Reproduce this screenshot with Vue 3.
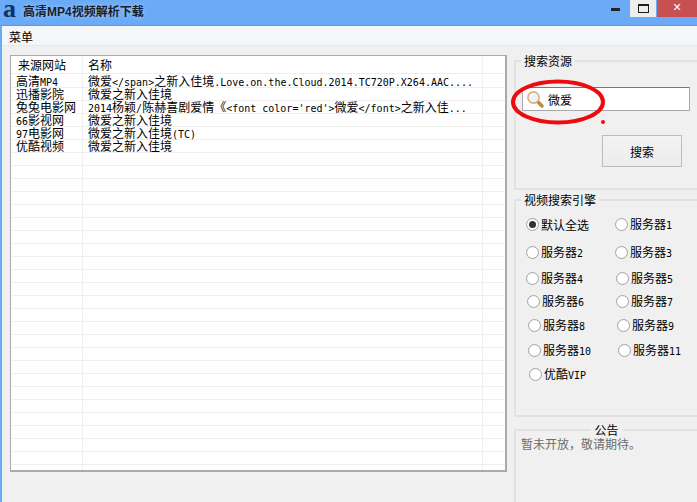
<script setup>
const segs = (t) => t.match(/[\x20-\x7e]+|[^\x20-\x7e]+/g).map((s) => ({ s, l: /^[\x20-\x7e]/.test(s) }))
const rows = [
  ['高清MP4', '微爱</span>之新入佳境.Love.on.the.Cloud.2014.TC720P.X264.AAC....'],
  ['迅播影院', '微爱之新入佳境'],
  ['兔兔电影网', "2014杨颖/陈赫喜剧爱情《<font color='red'>微爱</font>之新入佳..."],
  ['66影视网', '微爱之新入佳境'],
  ['97电影网', '微爱之新入佳境(TC)'],
  ['优酷视频', '微爱之新入佳境'],
]
const list = Array.from({ length: 31 }, (_, i) => {
  const r = rows[i] || ['', '']
  return { id: i, a: r[0] ? segs(r[0]) : [], b: r[1] ? segs(r[1]) : [] }
})
const radios = [
  [{ t: '默认全选', on: true, x: 0 }, { t: '服务器1', x: 0 }],
  [{ t: '服务器2', x: 0 }, { t: '服务器3', x: 0 }],
  [{ t: '服务器4', x: 0 }, { t: '服务器5', x: 1 }],
  [{ t: '服务器6', x: 1 }, { t: '服务器7', x: 0 }],
  [{ t: '服务器8', x: 2 }, { t: '服务器9', x: 0 }],
  [{ t: '服务器10', x: 2 }, { t: '服务器11', x: 1 }],
  [{ t: '优酷VIP', x: 3 }],
].map((r, i) => ({
  id: i,
  h: [28, 26, 23, 24, 25, 24, 24][i],
  cells: r.map((c) => ({ ...c, seg: segs(c.t) })),
}))
</script>

<template>
  <div class="win">
    <header class="title">
      <span class="logo">a</span>
      <span class="cap">高清<span class="capl">MP4</span>视频解析下载</span>
      <div class="ctrls">
        <span class="min"></span>
        <span class="max"><i></i></span>
        <span class="close">✕</span>
      </div>
    </header>
    <div class="inner">
      <nav class="menu">菜单</nav>
      <main class="body">
        <section class="list">
          <div class="head">
            <div class="h1">来源网站</div>
            <div class="h2">名称</div>
            <div class="h3"></div>
          </div>
          <div class="rows">
            <div v-for="r in list" :key="r.id" class="row">
              <div class="c1"><template v-for="(p, i) in r.a" :key="i"><span :class="{ lat: p.l }">{{ p.s }}</span></template></div>
              <div class="c2"><template v-for="(p, i) in r.b" :key="i"><span :class="{ lat: p.l }">{{ p.s }}</span></template></div>
              <div class="c3"></div>
            </div>
          </div>
        </section>
        <aside class="side">
          <fieldset class="grp g1">
            <legend>搜索资源</legend>
            <div class="input">
              <svg class="mag" width="19" height="19" viewBox="0 0 19 19">
                <line x1="11.5" y1="11.5" x2="16" y2="16" stroke="#bd8a4c" stroke-width="3.6" stroke-linecap="round" />
                <circle cx="7.5" cy="7.5" r="5.6" fill="#eef3f6" stroke="#dcb07c" stroke-width="1.6" />
                <path d="M4.5 8a3.4 3.4 0 0 1 3-3.6" fill="none" stroke="#fff" stroke-width="1.4" />
              </svg>
              <span class="val">微爱</span>
            </div>
            <svg class="ring" width="96" height="46" viewBox="0 0 96 46">
              <ellipse cx="48" cy="23" rx="45" ry="20.5" fill="none" stroke="#ee0b10" stroke-width="4" />
            </svg>
            <span class="dot"></span>
            <button class="btn" type="button">搜索</button>
          </fieldset>
          <fieldset class="grp g2">
            <legend>视频搜索引擎</legend>
            <div v-for="r in radios" :key="r.id" class="rrow" :style="{ height: r.h + 'px' }">
              <label v-for="c in r.cells" :key="c.t" class="radio" :style="{ marginLeft: c.x + 'px' }">
                <span class="rb" :class="{ on: c.on }"></span>
                <span class="rt"><template v-for="(p, i) in c.seg" :key="i"><span :class="{ lat: p.l }">{{ p.s }}</span></template></span>
              </label>
            </div>
          </fieldset>
          <fieldset class="grp g3">
            <legend>公告</legend>
            <p class="note">暂未开放，敬请期待。</p>
          </fieldset>
        </aside>
      </main>
    </div>
  </div>
</template>

<style>
html, body { margin: 0; padding: 0; overflow: hidden; }
</style>

<style scoped>
.win {
  width: 697px;
  height: 502px;
  display: flex;
  flex-direction: column;
  background: #6aaaf6;
  font: 12px/13px "Noto Sans CJK SC", sans-serif;
  color: #000;
  overflow: hidden;
}
.lat { font-family: "DejaVu Sans Mono", monospace; font-size: 10px; }
.title {
  display: flex;
  align-items: flex-start;
  box-sizing: border-box;
  border-bottom: 1px solid #5b98e2;
  height: 26px;
  flex: 0 0 26px;
}
.logo {
  width: 23px;
  box-sizing: border-box;
  padding-left: 3px;
  font: bold 26px/18px "Liberation Serif", serif;
  color: #0e3160;
}
.cap {
  font-weight: 700;
  line-height: 22px;
  color: #14202e;
  text-shadow: 0 0 5px rgba(255, 255, 255, .45);
}
.capl { font-family: "Liberation Sans", sans-serif; }
.ctrls { margin-left: auto; display: flex; height: 17px; }
.min {
  width: 9px;
  height: 3px;
  margin: 8px 10px 0 0;
  background: #222;
}
.max {
  width: 26px;
  height: 17px;
  background: #eceded;
  display: flex;
  align-items: center;
  justify-content: center;
  margin-right: 1px;
}
.max i {
  width: 9px;
  height: 6px;
  border: 1px solid #1c1c1c;
  border-top-width: 2px;
  display: block;
}
.close {
  width: 40px;
  height: 17px;
  background: #c75050;
  color: #fff;
  font: bold 11px/15px "DejaVu Sans", sans-serif;
  text-align: center;
}
.inner {
  flex: 1;
  margin-left: 2px;
  min-height: 0;
  display: flex;
  flex-direction: column;
  background: #f0f0f0;
}
.menu {
  height: 20px;
  box-sizing: border-box;
  background: #f5f6f7;
  border-bottom: 1px solid #e6e7e8;
  padding: 4px 0 0 7px;
}
.body { flex: 1; display: flex; min-height: 0; }
.list {
  width: 497px;
  height: 417px;
  margin: 9px 0 0 8px;
  box-sizing: border-box;
  border: 1px solid #a9a9b0;
  border-right-width: 2px;
  border-bottom-width: 2px;
  background: #fff;
  overflow: hidden;
}
.head {
  display: flex;
  height: 18px;
  border-bottom: 1px solid #e6eefb;
  box-sizing: border-box;
  line-height: 18px;
}
.h1 { width: 72px; padding-left: 7px; box-sizing: border-box; border-right: 1px solid #eef0f3; }
.h2 { width: 400px; padding-left: 5px; box-sizing: border-box; border-right: 1px solid #eef0f3; }
.h3 { flex: 1; }
.rows { padding-top: 1px; }
.row {
  display: flex;
  height: 13px;
  box-sizing: border-box;
  border-bottom: 1px solid #efefef;
  line-height: 11px;
  white-space: nowrap;
  margin-left: 1px;
}
.c1 { width: 71px; padding-left: 4px; box-sizing: border-box; border-right: 1px solid #efefef; }
.c2 { width: 400px; padding-left: 5px; box-sizing: border-box; border-right: 1px solid #efefef; }
.c3 { flex: 1; }
.side { flex: 1; margin-left: 7px; min-width: 0; display: flex; flex-direction: column; }
.grp {
  margin: 0;
  padding: 0;
  min-width: 0;
  border: 2px solid #e2e2e2;
  border-right: 0;
  position: relative;
  box-sizing: border-box;
}
.grp legend { padding: 0 3px; margin-left: 5px; line-height: 13px; }
.g1 { height: 136px; margin-top: 8px; }
.input {
  width: 168px;
  height: 24px;
  margin: 20px 0 0 6px;
  box-sizing: border-box;
  background: #fff;
  border: 1px solid #a9a9a9;
  border-top-color: #777;
  display: flex;
  align-items: center;
}
.mag { margin-left: 3px; }
.val { margin-left: 3px; }
.ring {
  position: absolute;
  left: -6px;
  top: 12px;
}
.dot {
  position: absolute;
  left: 85px;
  top: 53px;
  width: 4px;
  height: 4px;
  border-radius: 50%;
  background: #ee0b10;
}
.btn {
  display: block;
  width: 80px;
  height: 32px;
  margin: 24px 0 0 86px;
  padding: 0;
  border: 1px solid #bdbdbd;
  background: linear-gradient(#f3f3f3, #ececec);
  font: inherit;
  color: #000;
}
.g2 { height: 224px; margin-top: 3px; padding-top: 11px; }
.rrow { display: flex; align-items: flex-start; padding-left: 10px; }
.radio { flex: none; width: 89px; display: flex; align-items: center; height: 14px; }
.rb {
  width: 13px;
  height: 13px;
  box-sizing: border-box;
  border-radius: 50%;
  border: 1px solid #a5a5a5;
  background: #fff;
  margin-right: 2px;
  flex: none;
  box-shadow: inset 0 0 1px #ddd;
  position: relative;
}
.rb.on::after {
  content: "";
  position: absolute;
  inset: 2px;
  border-radius: 50%;
  background: #333;
}
.rt { white-space: nowrap; }
.g3 { flex: 1; margin-top: 6px; margin-bottom: -8px; }
.g3 legend { margin: 0 auto; position: relative; left: 0; }
.note { margin: 1px 0 0 5px; color: #6d6d6d; line-height: 14px; }
</style>
